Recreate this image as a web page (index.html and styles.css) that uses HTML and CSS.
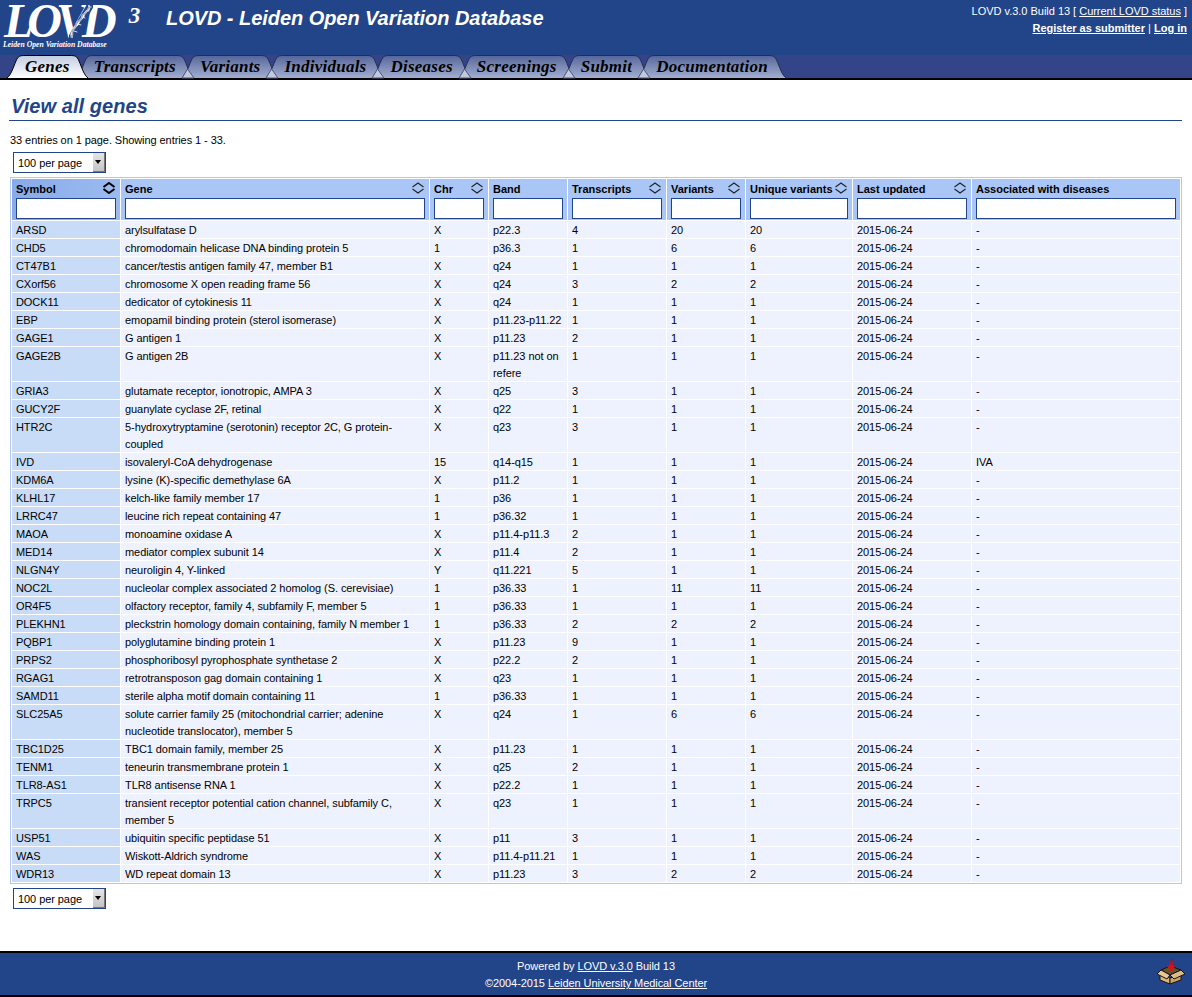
FILE: index.html
```html
<!DOCTYPE html>
<html lang="en">
<head>
<meta charset="utf-8">
<title>LOVD - Leiden Open Variation Database</title>
<link rel="stylesheet" href="styles.css">
</head>
<body>
<svg class="defs" width="0" height="0" aria-hidden="true">
  <defs>
    <linearGradient id="tabOff" x1="0" y1="0" x2="0" y2="1"><stop offset="0" stop-color="#56669a"/><stop offset="1" stop-color="#a2aed0"/></linearGradient>
    <linearGradient id="tabOn" x1="0" y1="0" x2="0" y2="1"><stop offset="0" stop-color="#c4cce0"/><stop offset="1" stop-color="#ffffff"/></linearGradient>
    <symbol id="capL" viewBox="0 0 18 23"><path stroke="none" d="M0 23C4 20 6 13 9 6C11 1 13 .5 18 .5V23Z"/><path fill="none" d="M0 23C4 20 6 13 9 6C11 1 13 .5 18 .5"/></symbol>
    <symbol id="capR" viewBox="0 0 18 23"><path stroke="none" d="M18 23C14 20 12 13 9 6C7 1 5 .5 0 .5V23Z"/><path fill="none" d="M18 23C14 20 12 13 9 6C7 1 5 .5 0 .5"/></symbol>
    <symbol id="sort" viewBox="0 0 14 12"><path d="M1.5 5L7 1L12.5 5M1.5 7L7 11L12.5 7" fill="none"/></symbol>
  </defs>
</svg>
<header class="top">
  <div class="logo">
    <div class="logo-mark"><span class="logo-word">LOVD</span><span class="logo-three">3</span></div>
    <div class="logo-sub">Leiden Open Variation Database</div>
    <svg class="dna" width="24" height="34" viewBox="0 0 24 34" aria-hidden="true">
      <path d="M21 1L3 32" stroke="#224488" stroke-width="7"/>
      <path d="M20 1C23 5 15 6 15 10C15 14 11 13 10 17C9 21 5 21 4 25C3 29 1 29 3 32" fill="none" stroke="#fff" stroke-width="1.7"/>
      <path d="M22 2C16 3 20 8 15 9C10 10 15 15 10 16C5 17 9 22 5 24C1 26 6 30 2 32" fill="none" stroke="#aab" stroke-width="1.5"/>
      <path d="M17 6L20 6M13 12L16 13M9 19L12 20M5 26L8 27" stroke="#dde" stroke-width="1"/>
    </svg>
  </div>
  <div class="site-title">LOVD - Leiden Open Variation Database</div>
  <div class="top-info">
    <div class="top-status">LOVD v.3.0 Build 13 [ <a href="#">Current LOVD status</a> ]</div>
    <div class="top-links"><a href="#"><b>Register as submitter</b></a> | <a href="#"><b>Log in</b></a></div>
  </div>
</header>
<nav class="tabs">
  <a class="tab on" href="#"><svg class="cap" fill="url(#tabOn)"><use href="#capL"/></svg><span class="tab-label">Genes</span><svg class="cap" fill="url(#tabOn)"><use href="#capR"/></svg></a>
  <a class="tab" href="#"><svg class="cap" fill="url(#tabOff)"><use href="#capL"/></svg><span class="tab-label">Transcripts</span><svg class="cap" fill="url(#tabOff)"><use href="#capR"/></svg></a>
  <a class="tab" href="#"><svg class="cap" viewBox="0 0 18 23" fill="url(#tabOff)"><use href="#capL" width="18" height="23"/><path class="notch" d="M5.5 14L12 23H0Z"/></svg><span class="tab-label">Variants</span><svg class="cap" fill="url(#tabOff)"><use href="#capR"/></svg></a>
  <a class="tab" href="#"><svg class="cap" viewBox="0 0 18 23" fill="url(#tabOff)"><use href="#capL" width="18" height="23"/><path class="notch" d="M5.5 14L12 23H0Z"/></svg><span class="tab-label">Individuals</span><svg class="cap" fill="url(#tabOff)"><use href="#capR"/></svg></a>
  <a class="tab" href="#"><svg class="cap" viewBox="0 0 18 23" fill="url(#tabOff)"><use href="#capL" width="18" height="23"/><path class="notch" d="M5.5 14L12 23H0Z"/></svg><span class="tab-label">Diseases</span><svg class="cap" fill="url(#tabOff)"><use href="#capR"/></svg></a>
  <a class="tab" href="#"><svg class="cap" viewBox="0 0 18 23" fill="url(#tabOff)"><use href="#capL" width="18" height="23"/><path class="notch" d="M5.5 14L12 23H0Z"/></svg><span class="tab-label">Screenings</span><svg class="cap" fill="url(#tabOff)"><use href="#capR"/></svg></a>
  <a class="tab" href="#"><svg class="cap" viewBox="0 0 18 23" fill="url(#tabOff)"><use href="#capL" width="18" height="23"/><path class="notch" d="M5.5 14L12 23H0Z"/></svg><span class="tab-label">Submit</span><svg class="cap" fill="url(#tabOff)"><use href="#capR"/></svg></a>
  <a class="tab" href="#"><svg class="cap" viewBox="0 0 18 23" fill="url(#tabOff)"><use href="#capL" width="18" height="23"/><path class="notch" d="M5.5 14L12 23H0Z"/></svg><span class="tab-label">Documentation</span><svg class="cap" fill="url(#tabOff)"><use href="#capR"/></svg></a>
</nav>
<main class="content">
  <h1 class="page-title">View all genes</h1>
  <p class="entries">33 entries on 1 page. Showing entries 1 - 33.</p>
  <div class="pager"><span class="pager-text">100 per page</span><span class="pager-btn"></span></div>
  <table class="grid">
    <colgroup>
      <col class="w-symbol"><col class="w-gene"><col class="w-chr"><col class="w-band"><col class="w-trans"><col class="w-var"><col class="w-uniq"><col class="w-date"><col class="w-dis">
    </colgroup>
    <thead>
      <tr>
        <th class="sorted"><div class="th-head"><span>Symbol</span><svg class="sort bold"><use href="#sort"/></svg></div><input class="filter" type="text"></th>
        <th><div class="th-head"><span>Gene</span><svg class="sort"><use href="#sort"/></svg></div><input class="filter" type="text"></th>
        <th><div class="th-head"><span>Chr</span><svg class="sort"><use href="#sort"/></svg></div><input class="filter" type="text"></th>
        <th><div class="th-head"><span>Band</span></div><input class="filter" type="text"></th>
        <th><div class="th-head"><span>Transcripts</span><svg class="sort"><use href="#sort"/></svg></div><input class="filter" type="text"></th>
        <th><div class="th-head"><span>Variants</span><svg class="sort"><use href="#sort"/></svg></div><input class="filter" type="text"></th>
        <th><div class="th-head"><span>Unique variants</span><svg class="sort"><use href="#sort"/></svg></div><input class="filter" type="text"></th>
        <th><div class="th-head"><span>Last updated</span><svg class="sort"><use href="#sort"/></svg></div><input class="filter" type="text"></th>
        <th><div class="th-head"><span>Associated with diseases</span></div><input class="filter" type="text"></th>
      </tr>
    </thead>
    <tbody>
      <tr><td>ARSD</td><td>arylsulfatase D</td><td>X</td><td>p22.3</td><td>4</td><td>20</td><td>20</td><td>2015-06-24</td><td>-</td></tr>
      <tr><td>CHD5</td><td>chromodomain helicase DNA binding protein 5</td><td>1</td><td>p36.3</td><td>1</td><td>6</td><td>6</td><td>2015-06-24</td><td>-</td></tr>
      <tr><td>CT47B1</td><td>cancer/testis antigen family 47, member B1</td><td>X</td><td>q24</td><td>1</td><td>1</td><td>1</td><td>2015-06-24</td><td>-</td></tr>
      <tr><td>CXorf56</td><td>chromosome X open reading frame 56</td><td>X</td><td>q24</td><td>3</td><td>2</td><td>2</td><td>2015-06-24</td><td>-</td></tr>
      <tr><td>DOCK11</td><td>dedicator of cytokinesis 11</td><td>X</td><td>q24</td><td>1</td><td>1</td><td>1</td><td>2015-06-24</td><td>-</td></tr>
      <tr><td>EBP</td><td>emopamil binding protein (sterol isomerase)</td><td>X</td><td>p11.23-p11.22</td><td>1</td><td>1</td><td>1</td><td>2015-06-24</td><td>-</td></tr>
      <tr><td>GAGE1</td><td>G antigen 1</td><td>X</td><td>p11.23</td><td>2</td><td>1</td><td>1</td><td>2015-06-24</td><td>-</td></tr>
      <tr><td>GAGE2B</td><td>G antigen 2B</td><td>X</td><td>p11.23 not on refere</td><td>1</td><td>1</td><td>1</td><td>2015-06-24</td><td>-</td></tr>
      <tr><td>GRIA3</td><td>glutamate receptor, ionotropic, AMPA 3</td><td>X</td><td>q25</td><td>3</td><td>1</td><td>1</td><td>2015-06-24</td><td>-</td></tr>
      <tr><td>GUCY2F</td><td>guanylate cyclase 2F, retinal</td><td>X</td><td>q22</td><td>1</td><td>1</td><td>1</td><td>2015-06-24</td><td>-</td></tr>
      <tr><td>HTR2C</td><td>5-hydroxytryptamine (serotonin) receptor 2C, G protein-coupled</td><td>X</td><td>q23</td><td>3</td><td>1</td><td>1</td><td>2015-06-24</td><td>-</td></tr>
      <tr><td>IVD</td><td>isovaleryl-CoA dehydrogenase</td><td>15</td><td>q14-q15</td><td>1</td><td>1</td><td>1</td><td>2015-06-24</td><td>IVA</td></tr>
      <tr><td>KDM6A</td><td>lysine (K)-specific demethylase 6A</td><td>X</td><td>p11.2</td><td>1</td><td>1</td><td>1</td><td>2015-06-24</td><td>-</td></tr>
      <tr><td>KLHL17</td><td>kelch-like family member 17</td><td>1</td><td>p36</td><td>1</td><td>1</td><td>1</td><td>2015-06-24</td><td>-</td></tr>
      <tr><td>LRRC47</td><td>leucine rich repeat containing 47</td><td>1</td><td>p36.32</td><td>1</td><td>1</td><td>1</td><td>2015-06-24</td><td>-</td></tr>
      <tr><td>MAOA</td><td>monoamine oxidase A</td><td>X</td><td>p11.4-p11.3</td><td>2</td><td>1</td><td>1</td><td>2015-06-24</td><td>-</td></tr>
      <tr><td>MED14</td><td>mediator complex subunit 14</td><td>X</td><td>p11.4</td><td>2</td><td>1</td><td>1</td><td>2015-06-24</td><td>-</td></tr>
      <tr><td>NLGN4Y</td><td>neuroligin 4, Y-linked</td><td>Y</td><td>q11.221</td><td>5</td><td>1</td><td>1</td><td>2015-06-24</td><td>-</td></tr>
      <tr><td>NOC2L</td><td>nucleolar complex associated 2 homolog (S. cerevisiae)</td><td>1</td><td>p36.33</td><td>1</td><td>11</td><td>11</td><td>2015-06-24</td><td>-</td></tr>
      <tr><td>OR4F5</td><td>olfactory receptor, family 4, subfamily F, member 5</td><td>1</td><td>p36.33</td><td>1</td><td>1</td><td>1</td><td>2015-06-24</td><td>-</td></tr>
      <tr><td>PLEKHN1</td><td>pleckstrin homology domain containing, family N member 1</td><td>1</td><td>p36.33</td><td>2</td><td>2</td><td>2</td><td>2015-06-24</td><td>-</td></tr>
      <tr><td>PQBP1</td><td>polyglutamine binding protein 1</td><td>X</td><td>p11.23</td><td>9</td><td>1</td><td>1</td><td>2015-06-24</td><td>-</td></tr>
      <tr><td>PRPS2</td><td>phosphoribosyl pyrophosphate synthetase 2</td><td>X</td><td>p22.2</td><td>2</td><td>1</td><td>1</td><td>2015-06-24</td><td>-</td></tr>
      <tr><td>RGAG1</td><td>retrotransposon gag domain containing 1</td><td>X</td><td>q23</td><td>1</td><td>1</td><td>1</td><td>2015-06-24</td><td>-</td></tr>
      <tr><td>SAMD11</td><td>sterile alpha motif domain containing 11</td><td>1</td><td>p36.33</td><td>1</td><td>1</td><td>1</td><td>2015-06-24</td><td>-</td></tr>
      <tr><td>SLC25A5</td><td>solute carrier family 25 (mitochondrial carrier; adenine nucleotide translocator), member 5</td><td>X</td><td>q24</td><td>1</td><td>6</td><td>6</td><td>2015-06-24</td><td>-</td></tr>
      <tr><td>TBC1D25</td><td>TBC1 domain family, member 25</td><td>X</td><td>p11.23</td><td>1</td><td>1</td><td>1</td><td>2015-06-24</td><td>-</td></tr>
      <tr><td>TENM1</td><td>teneurin transmembrane protein 1</td><td>X</td><td>q25</td><td>2</td><td>1</td><td>1</td><td>2015-06-24</td><td>-</td></tr>
      <tr><td>TLR8-AS1</td><td>TLR8 antisense RNA 1</td><td>X</td><td>p22.2</td><td>1</td><td>1</td><td>1</td><td>2015-06-24</td><td>-</td></tr>
      <tr><td>TRPC5</td><td>transient receptor potential cation channel, subfamily C, member 5</td><td>X</td><td>q23</td><td>1</td><td>1</td><td>1</td><td>2015-06-24</td><td>-</td></tr>
      <tr><td>USP51</td><td>ubiquitin specific peptidase 51</td><td>X</td><td>p11</td><td>3</td><td>1</td><td>1</td><td>2015-06-24</td><td>-</td></tr>
      <tr><td>WAS</td><td>Wiskott-Aldrich syndrome</td><td>X</td><td>p11.4-p11.21</td><td>1</td><td>1</td><td>1</td><td>2015-06-24</td><td>-</td></tr>
      <tr><td>WDR13</td><td>WD repeat domain 13</td><td>X</td><td>p11.23</td><td>3</td><td>2</td><td>2</td><td>2015-06-24</td><td>-</td></tr>
    </tbody>
  </table>
  <div class="pager pager-bottom"><span class="pager-text">100 per page</span><span class="pager-btn"></span></div>
</main>
<footer class="foot">
  <div>Powered by <a href="#">LOVD v.3.0</a> Build 13</div>
  <div>©2004-2015 <a href="#">Leiden University Medical Center</a></div>
  <svg class="box" width="30" height="26" viewBox="0 0 30 26" aria-hidden="true">
    <defs><linearGradient id="arrowFill" x1="0" y1="0" x2="0" y2="1"><stop offset="0" stop-color="#4a2a70"/><stop offset=".55" stop-color="#d0141c"/><stop offset="1" stop-color="#e01418"/></linearGradient></defs>
    <path d="M5 11L14 7L25 11L14 16Z" fill="#6a4e2a" stroke="#1a1410"/>
    <path d="M13 0H17V7H19L15 13L11 7H13Z" fill="url(#arrowFill)"/>
    <path d="M4 15L14 19V25L4 21Z" fill="#d9b57e" stroke="#1a1410" stroke-linejoin="round"/>
    <path d="M25 15L14 19V25L25 21Z" fill="#c8a26a" stroke="#1a1410" stroke-linejoin="round"/>
    <path d="M5 11L14 16L11 20L1 15Z" fill="#e6c896" stroke="#1a1410" stroke-linejoin="round"/>
    <path d="M25 11L14 16L18 20L29 15Z" fill="#dcbc86" stroke="#1a1410" stroke-linejoin="round"/>
  </svg>
</footer>
</body>
</html>
```
FILE: styles.css
```css
* { box-sizing: border-box; }
html, body { margin: 0; padding: 0; }
body {
  font-family: "Liberation Sans", Arial, sans-serif;
  font-size: 11px;
  line-height: 17px;
  letter-spacing: -0.07px;
  color: #000;
  background: #fff;
}
.defs { position: absolute; }
.top {
  display: flex;
  height: 55px;
  background: #224488;
  color: #fff;
}
.logo {
  position: relative;
  width: 166px;
  flex: none;
  padding: 0 0 0 4px;
  font-family: "Liberation Serif", serif;
  font-style: italic;
}
.logo-mark { display: flex; height: 40px; padding-top: 1px; }
.logo-word {
  font-size: 48px;
  line-height: 39px;
  letter-spacing: -6px;
  font-weight: 700;
}
.logo-three {
  font-size: 23px;
  line-height: 30px;
  font-weight: 700;
  letter-spacing: 0;
  margin-left: 18px;
}
.logo-sub {
  font-size: 7.7px;
  line-height: 9px;
  font-weight: 700;
  letter-spacing: 0;
  white-space: nowrap;
  margin-left: -1px;
}
.dna { position: absolute; left: 69px; top: 5px; }
.dna path { stroke-linecap: round; }
.site-title {
  font-size: 20px;
  font-weight: 700;
  font-style: italic;
  line-height: 24px;
  letter-spacing: -0.05px;
  padding-top: 6px;
}
.top-info {
  margin-left: auto;
  padding: 3px 5px 0 0;
  text-align: right;
}
.top-info a { color: #fff; }
.top-status { letter-spacing: -0.02px; }
.top-links { letter-spacing: 0; }
.tabs {
  display: flex;
  height: 25px;
  padding-left: 7px;
  background: #334488;
  border-bottom: 2px solid #000;
}
.tab {
  position: relative;
  display: flex;
  height: 23px;
  margin-left: -12px;
  color: #000;
  text-decoration: none;
  stroke: #252c50;
  stroke-width: 1;
}
.tab.on { margin-left: 0; z-index: 2; stroke: #000; }
.cap { width: 18px; height: 23px; flex: none; display: block; overflow: visible; }
.notch { fill: #c2c9dc; stroke: #4c5680; }
.tab-label {
  display: block;
  height: 23px;
  font-family: "Liberation Serif", serif;
  font-size: 17px;
  font-weight: 700;
  font-style: italic;
  letter-spacing: 0.24px;
  line-height: 22px;
  background: linear-gradient(#56669a, #a2aed0);
  border-top: 1px solid #252c50;
}
.tab.on .tab-label { background: linear-gradient(#c4cce0, #fff); border-top-color: #000; }
.content { padding: 0 10px 0 10px; }
.page-title {
  margin: 0 0 0 -1px;
  padding: 15px 0 2px 2px;
  height: 41px;
  font-size: 20px;
  line-height: 23px;
  font-weight: 700;
  font-style: italic;
  letter-spacing: 0.07px;
  color: #224488;
  border-bottom: 1px solid #224488;
}
.entries { margin: 0; padding-top: 11px; height: 31px; }
.pager {
  display: flex;
  width: 93px;
  height: 21px;
  margin-left: 3px;
  background: #fff;
  border: 1px solid #224488;
}
.pager-text { flex: 1; padding-left: 4px; line-height: 20px; }
.pager-btn {
  position: relative;
  width: 12px;
  background: linear-gradient(#e6e6e6, #c4c4c4);
  border-right: 1px solid #777;
  border-bottom: 1px solid #777;
}
.pager-btn::after {
  content: "";
  position: absolute;
  left: 2px;
  top: 7px;
  border: 3px solid transparent;
  border-top: 4px solid #000;
  border-bottom: 0;
}
.pager-bottom { margin-top: 4px; }
.grid {
  table-layout: fixed;
  width: 1172px;
  margin-top: 4px;
  border: 1px solid #b2c8f0;
  border-collapse: separate;
  border-spacing: 1px;
}
.w-symbol { width: 108px; }
.w-gene { width: 308px; }
.w-chr { width: 58px; }
.w-band { width: 78px; }
.w-trans { width: 98px; }
.w-var { width: 78px; }
.w-uniq { width: 106px; }
.w-date { width: 118px; }
.w-dis { width: 208px; }
.grid th {
  padding: 0 4px 1px;
  background: #aac6f6;
  text-align: left;
  font-weight: 700;
  letter-spacing: 0;
  vertical-align: top;
}
.grid th.sorted { background: linear-gradient(100deg, #88aae8, #9cbcf0); }
.th-head {
  display: flex;
  justify-content: space-between;
  align-items: center;
  height: 19px;
  white-space: nowrap;
}
.th-head span { padding-top: 2px; }
.sort {
  flex: none;
  width: 14px;
  height: 12px;
  margin-top: -1px;
  stroke: #222;
  stroke-width: 1.1;
  fill: none;
}
.sort.bold { stroke: #000; stroke-width: 2; }
.filter {
  display: block;
  width: 100%;
  height: 21px;
  margin: 0;
  padding: 0 2px;
  background: #fff;
  border: 1px solid #224488;
  border-radius: 0;
  font: inherit;
}
.grid td {
  padding: 1px 4px 0;
  background: #eef2ff;
  vertical-align: top;
}
.grid td::after { content: ""; display: block; margin-top: -1px; }
.grid td:first-child { background: #c8dcf8; }
.foot {
  position: relative;
  height: 46px;
  margin-top: 42px;
  padding-top: 5px;
  background: #224488;
  border-top: 2px solid #000;
  border-bottom: 2px solid #000;
  color: #fff;
  text-align: center;
}
.foot a { color: #fff; }
.box { position: absolute; right: 6px; top: 6px; }
```
